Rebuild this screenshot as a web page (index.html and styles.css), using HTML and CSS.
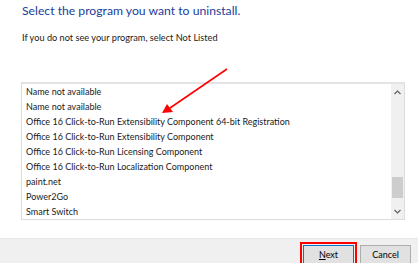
FILE: index.html
```html
<!DOCTYPE html>
<html lang="en">

<head>
  <meta charset="UTF-8">
  <meta name="viewport" content="width=device-width, initial-scale=1.0">
  <title>Uninstall</title>
  <link rel="stylesheet" href="styles.css">
</head>

<body>
  <main class="wizard">
    <h1 class="title">Select the program you want to uninstall.</h1>
    <p class="hint">If you do not see your program, select Not Listed</p>

    <div class="listbox">
      <ul class="items">
        <li>Name not available</li>
        <li>Name not available</li>
        <li>Office 16 Click-to-Run Extensibility Component 64-bit Registration</li>
        <li>Office 16 Click-to-Run Extensibility Component</li>
        <li>Office 16 Click-to-Run Licensing Component</li>
        <li>Office 16 Click-to-Run Localization Component</li>
        <li>paint.net</li>
        <li>Power2Go</li>
        <li>Smart Switch</li>
        <li>Update for Windows 10 for x64-based Systems (KB4023057)</li>
      </ul>
      <div class="scrollbar">
        <span class="arrow-btn">
          <svg width="7" height="5" viewBox="0 0 7 5"><path d="M0.5 4 L3.5 1 L6.5 4" fill="none" stroke="#606060" stroke-width="1.2"/></svg>
        </span>
        <span class="track"><span class="thumb"></span></span>
        <span class="arrow-btn">
          <svg width="7" height="5" viewBox="0 0 7 5"><path d="M0.5 1 L3.5 4 L6.5 1" fill="none" stroke="#606060" stroke-width="1.2"/></svg>
        </span>
      </div>
    </div>
  </main>

  <footer class="buttons">
    <button class="btn btn-default"><u>N</u>ext</button>
    <button class="btn">Cancel</button>
  </footer>

  <!-- red annotation arrow drawn over the dialog -->
  <svg class="annotation" width="418" height="263" viewBox="0 0 418 263">
    <line x1="227" y1="69" x2="170" y2="108" stroke="#ff0000" stroke-width="1.6"/>
    <polygon points="162,113 167,104 173,112" fill="#ff0000"/>
  </svg>
</body>

</html>
```

FILE: styles.css
```css
body {
  margin: 0;
  padding: 0;
  width: 418px;
  height: 263px;
  overflow: hidden;
  background: #fff;
  font-family: Lato, "Noto Sans", sans-serif;
  color: #000;
  position: relative;
}

.wizard {
  height: 238px;
  padding: 0 13px 0 21px;
  box-sizing: border-box;
}

.title {
  margin: 0;
  padding: 3px 0 0 1px;
  font-size: 12.2px;
  font-weight: normal;
  color: #1c3d9a;
  line-height: 16px;
}

.hint {
  margin: 13px 0 0 1px;
  font-size: 9.2px;
  line-height: 12px;
  color: #1a1a1a;
}

.listbox {
  margin-top: 38px;
  height: 138px;
  border: 1px solid #dcdcdc;
  border-top: 2px solid #e3e3e3;
  display: flex;
  box-sizing: border-box;
}

.items {
  list-style: none;
  margin: 0;
  padding: 0 0 0 4px;
  flex: 1;
  overflow: hidden;
}

.items li {
  font-size: 9px;
  line-height: 15px;
  height: 15px;
  white-space: nowrap;
  color: #1a1a1a;
}

.scrollbar {
  width: 13px;
  background: #f0f0f0;
  display: flex;
  flex-direction: column;
}

.arrow-btn {
  height: 16px;
  display: flex;
  align-items: center;
  justify-content: center;
}

.track {
  flex: 1;
  display: flex;
  flex-direction: column;
  justify-content: flex-end;
}

.thumb {
  height: 21px;
  margin: 0 1px 5px;
  background: #cdcdcd;
}

.buttons {
  height: 25px;
  background: #f0f0f0;
  border-top: 1px solid #e6e6e6;
  display: flex;
  justify-content: flex-end;
  align-items: flex-start;
  gap: 6px;
  padding: 6px 7px 0 0;
}

.btn {
  width: 51px;
  height: 22px;
  padding: 0 0 4px;
  font-family: inherit;
  font-size: 9px;
  color: #000;
  background: #e1e1e1;
  border: 1px solid #adadad;
}

.btn-default {
  border-color: #0078d7;
  outline: 2px solid #ff0000;
  outline-offset: 1px;
}

.annotation {
  position: absolute;
  left: 0;
  top: 0;
  pointer-events: none;
}
```
